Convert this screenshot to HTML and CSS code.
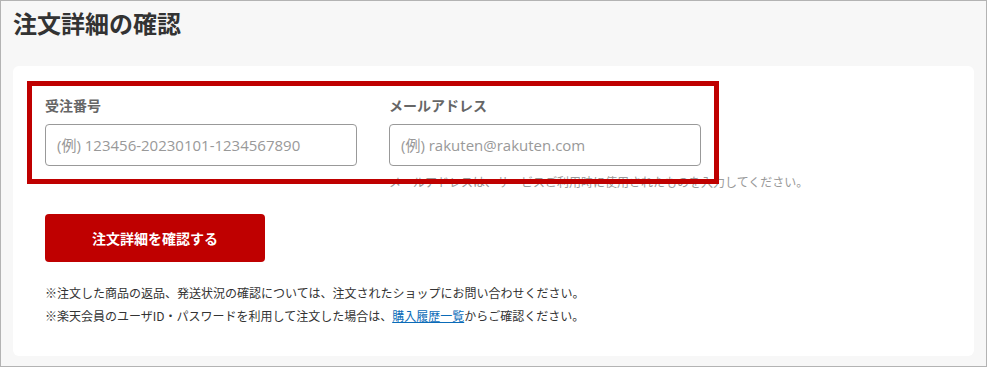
FILE: index.html
```html
<!DOCTYPE html>
<html lang="ja">
<head>
  <meta charset="UTF-8">
  <meta name="viewport" content="width=device-width, initial-scale=1.0">
  <title>注文詳細の確認</title>
  <link rel="stylesheet" href="styles.css">
</head>
<body>

<div class="page">
  <h1 class="page-title">注文詳細の確認</h1>

  <div class="card">
    <div class="fields">
      <div class="field">
        <label class="field-label" for="order">受注番号</label>
        <input class="field-input" id="order" type="text" placeholder="(例) 123456-20230101-1234567890">
      </div>
      <div class="field">
        <label class="field-label" for="mail">メールアドレス</label>
        <input class="field-input" id="mail" type="text" placeholder="(例) rakuten@rakuten.com">
        <p class="field-help">メールアドレスは、サービスご利用時に使用されたものを入力してください。</p>
      </div>
    </div>

    <button class="submit" type="button">注文詳細を確認する</button>

    <ul class="notes">
      <li>※注文した商品の返品、発送状況の確認については、注文されたショップにお問い合わせください。</li>
      <li>※楽天会員のユーザID・パスワードを利用して注文した場合は、<a href="#">購入履歴一覧</a>からご確認ください。</li>
    </ul>

    <div class="highlight"></div>
  </div>
</div>

</body>
</html>
```

FILE: styles.css
```css
html, body {
  margin: 0;
}

body {
  font-family: 'Noto Sans CJK JP', 'Noto Sans', sans-serif;
  background-color: #f7f7f7;
  color: #333;
  height: 367px;
  box-sizing: border-box;
  border: 1px solid #b3b3b3;
}

.page {
  padding: 4px 12px 0;
}

.page-title {
  margin: 0;
  font-size: 24px;
  line-height: 36px;
  font-weight: bold;
  color: #333;
}

.card {
  position: relative;
  margin-top: 25px;
  background-color: #fff;
  border-radius: 6px;
  padding: 29px 32px 29px;
}

.fields {
  display: grid;
  grid-template-columns: 312px 1fr;
  column-gap: 32px;
}

.field {
  display: flex;
  flex-direction: column;
  align-items: flex-start;
}

.field-label {
  font-size: 14px;
  line-height: 20px;
  font-weight: bold;
  color: #666;
}

.field-input {
  margin-top: 9px;
  width: 312px;
  height: 42px;
  box-sizing: border-box;
  border: 1px solid #999;
  border-radius: 4px;
  padding: 0 11px;
  font-family: 'Open Sans', 'Noto Sans CJK JP', sans-serif;
  font-size: 15px;
  color: #333;
}

.field-input::placeholder {
  color: #999;
}

.field-help {
  margin: 7px 0 0;
  font-size: 12px;
  line-height: 18px;
  color: #999;
  white-space: nowrap;
}

.submit {
  display: block;
  margin-top: 23px;
  width: 220px;
  height: 48px;
  border: none;
  border-radius: 4px;
  background-color: #bf0000;
  color: #fff;
  font-family: inherit;
  font-size: 14px;
  font-weight: bold;
  cursor: pointer;
}

.notes {
  list-style: none;
  margin: 19px 0 0;
  padding: 0;
  font-size: 12px;
  line-height: 23px;
  color: #333;
}

.notes a {
  color: #0a6bb8;
}

.highlight {
  position: absolute;
  left: 14px;
  top: 15px;
  width: 692px;
  height: 103px;
  box-sizing: border-box;
  border: 5px solid #bf0000;
  pointer-events: none;
}
```
